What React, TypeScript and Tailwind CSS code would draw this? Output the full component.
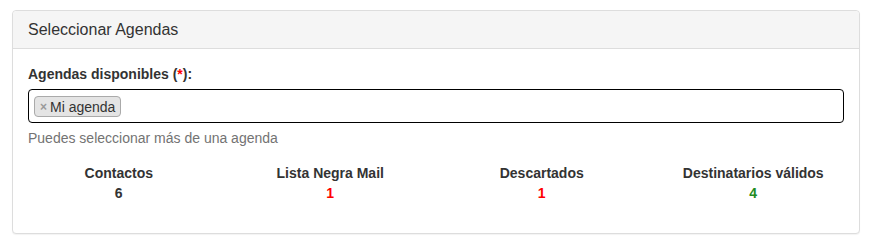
const stats = [
  { label: 'Contactos', value: '6', color: 'text-[#333]' },
  { label: 'Lista Negra Mail', value: '1', color: 'text-[#ff0000]' },
  { label: 'Descartados', value: '1', color: 'text-[#ff0000]' },
  { label: 'Destinatarios válidos', value: '4', color: 'text-[#228b22]' },
];

export default function App() {
  return (
    <div className="min-h-[247px] bg-white pl-3 pt-2.5 font-['Liberation_Sans',Arial,sans-serif] text-sm text-[#333]">
      <section className="w-[848px] rounded border border-[#ddd] bg-white shadow-[0_1px_1px_rgba(0,0,0,0.05)]">
        <div className="rounded-t border-b border-[#ddd] bg-[#f5f5f5] px-[15px] py-[9px]">
          <h3 className="text-base leading-[19px] text-[#333]">Seleccionar Agendas</h3>
        </div>
        <div className="py-[15px]">
          <div className="px-[15px]">
            <label className="mb-[5px] block font-bold leading-5">
              Agendas disponibles (<span className="text-[#ff0000]">*</span>):
            </label>
            <div className="flex h-[34px] items-start rounded border border-black px-[5px]">
              <span className="mt-[6px] flex h-[21px] items-center rounded border border-[#aaa] bg-[#e4e4e4] px-[5px] leading-5">
                <span className="mr-[3px] text-xs font-bold text-[#999]">×</span>
                Mi agenda
              </span>
            </div>
            <p className="mt-[5px] leading-5 text-[#737373]">Puedes seleccionar más de una agenda</p>
          </div>
          <div className="mt-[15px] grid grid-cols-4 pb-[15px]">
            {stats.map((s) => (
              <div key={s.label} className="text-center font-bold leading-5">
                <div>{s.label}</div>
                <div className={s.color}>{s.value}</div>
              </div>
            ))}
          </div>
        </div>
      </section>
    </div>
  );
}
